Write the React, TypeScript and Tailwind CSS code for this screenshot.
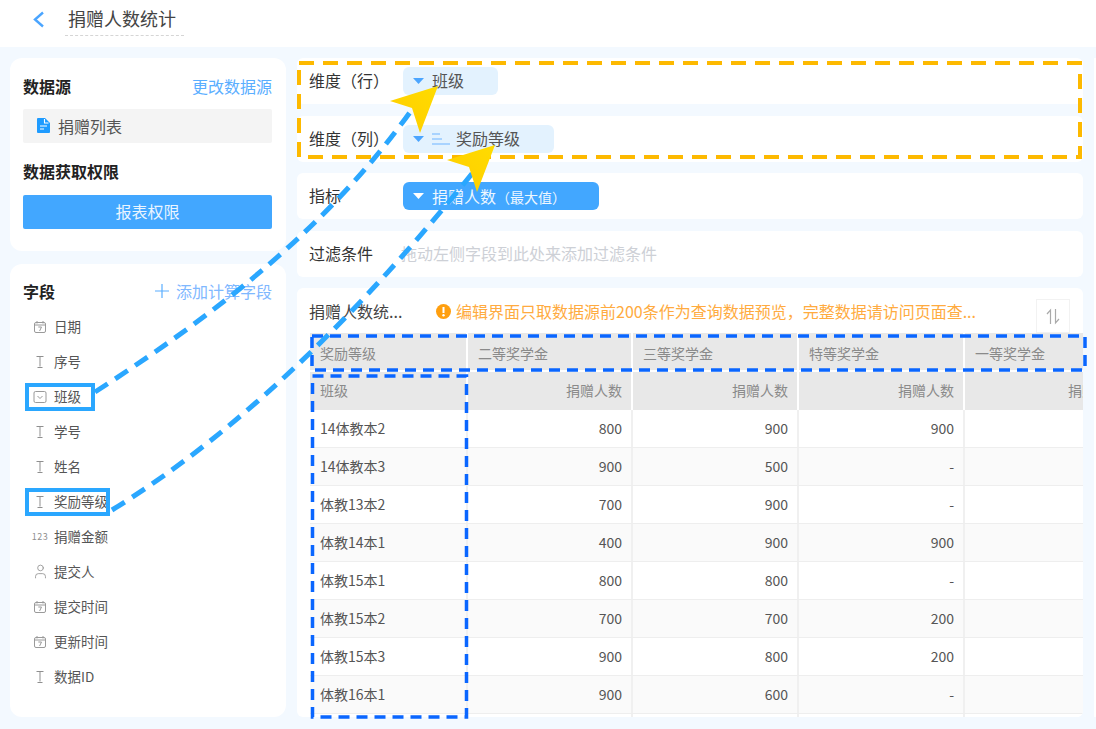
import React from "react";
import { User } from "lucide-react";

const font = { fontFamily: '"Noto Sans CJK SC", "Noto Sans", sans-serif' };

function CalIcon() {
  return (
    <svg width="14" height="14" viewBox="0 0 14 14" fill="none" stroke="#9a9a9a" strokeWidth="1">
      <rect x="1.5" y="2.5" width="11" height="10" rx="1.5" />
      <path d="M1.5 5h11M4 1v2.5M10 1v2.5" />
      <path d="M5.3 7h3.2L6.600 11" />
    </svg>
  );
}
function TIcon() {
  return (
    <svg width="14" height="14" viewBox="0 0 14 14" fill="none" stroke="#8f8f8f" strokeWidth="1">
      <path d="M3.500 1.500h7M7 1.500v10M4.500 12.500h5" />
    </svg>
  );
}
function BoxIcon() {
  return (
    <svg width="14" height="14" viewBox="0 0 14 14" fill="none" stroke="#9a9a9a" strokeWidth="1">
      <rect x="1" y="1.500" width="12" height="11" rx="1.500" />
      <path d="M4.500 6l2.500 2.500L9.500 6" />
    </svg>
  );
}
function NumIcon() {
  return <span className="text-[9px] leading-none tracking-[0.5px] text-[#8f8f8f] whitespace-nowrap">123</span>;
}
function UserIcon() {
  return <User size={17} strokeWidth={1.1} color="#8a8a8a" />;
}

const fields: { n: string; i: React.ReactNode; mark?: string }[] = [
  { n: "日期", i: <CalIcon /> },
  { n: "序号", i: <TIcon /> },
  { n: "班级", i: <BoxIcon />, mark: "w-[70px]" },
  { n: "学号", i: <TIcon /> },
  { n: "姓名", i: <TIcon /> },
  { n: "奖励等级", i: <TIcon />, mark: "w-[85px]" },
  { n: "捐赠金额", i: <NumIcon /> },
  { n: "提交人", i: <UserIcon /> },
  { n: "提交时间", i: <CalIcon /> },
  { n: "更新时间", i: <CalIcon /> },
  { n: "数据ID", i: <TIcon /> },
];

const cols = "grid grid-cols-[158px_165px_166px_166px_170px] w-[825px]";
const rows = [
  ["14体教本2", "800", "900", "900"],
  ["14体教本3", "900", "500", "-"],
  ["体教13本2", "700", "900", "-"],
  ["体教14本1", "400", "900", "900"],
  ["体教15本1", "800", "800", "-"],
  ["体教15本2", "700", "700", "200"],
  ["体教15本3", "900", "800", "200"],
  ["体教16本1", "900", "600", "-"],
  ["", "", "", ""],
];

function Tri({ c }: { c: string }) {
  return (
    <svg width="11" height="6" viewBox="0 0 11 6" className="shrink-0">
      <path d="M0 0h11L5.500 6z" fill={c} />
    </svg>
  );
}

export default function App() {
  return (
    <div style={font} className="relative w-[1096px] h-[729px] overflow-hidden bg-[#f3f9ff] text-[#333]">
      {/* Header */}
      <div className="h-[47px] bg-white flex items-center pl-[32px]">
        <svg width="13" height="17" viewBox="0 0 13 17" fill="none" className="-mt-[9px]">
          <path d="M11 1.500L3 8.500l8 7" stroke="#4ba5ff" strokeWidth="2.400" />
        </svg>
        <div className="ml-[20px] -mt-[12px] h-[36px] w-[119px] border-b border-dashed border-[#d5d5d5] pl-[3px] text-[18px] leading-[36px] text-[#444]">
          捐赠人数统计
        </div>
      </div>

      <div className="flex pt-[11px] pl-[10px] gap-[11px]">
        {/* Left column */}
        <div className="w-[276px] flex flex-col gap-[13px]">
          <div className="h-[193px] rounded-[12px] bg-white pl-[13px] pr-[14px] pt-[16px]">
            <div className="flex justify-between items-center h-[24px]">
              <span className="text-[16px] font-bold text-[#222]">数据源</span>
              <span className="text-[16px] text-[#5aaeff]">更改数据源</span>
            </div>
            <div className="mt-[11px] h-[34px] bg-[#f4f4f4] rounded-[2px] flex items-center pl-[14px] gap-[8px] text-[16px] text-[#555] pb-[1px]">
              <svg width="13" height="15" viewBox="0 0 13 15">
                <path d="M0 1a1 1 0 011-1h7l5 5v9a1 1 0 01-1 1H1a1 1 0 01-1-1z" fill="#1e9bff" />
                <path d="M3 8h7M3 11h4M7.500 1v4h4" stroke="#fff" strokeWidth="1.100" fill="none" />
              </svg>
              捐赠列表
            </div>
            <div className="mt-[16px] h-[24px] flex items-center text-[16px] font-bold text-[#222]">数据获取权限</div>
            <div className="mt-[12px] h-[34px] rounded-[2px] bg-[#42a7ff] flex items-center justify-center text-[16px] text-[#eaf5ff] pb-[2px]">
              报表权限
            </div>
          </div>
          <div className="h-[453px] rounded-[12px] bg-white pl-[13px] pr-[14px] pt-[15px]">
            <div className="flex justify-between items-center h-[24px]">
              <span className="text-[16px] font-bold text-[#222]">字段</span>
              <span className="flex items-center gap-[6px] text-[16px] text-[#7fb8ff]">
                <svg width="16" height="16" viewBox="0 0 16 16" stroke="#5aaeff" strokeWidth="1.200">
                  <path d="M8 1v14M1 8h14" />
                </svg>
                添加计算字段
              </span>
            </div>
            <div className="mt-[6px]">
              {fields.map((f) => (
                <div key={f.n} className="relative h-[35px] flex items-center text-[13.5px] text-[#555] pl-[8px]">
                  <span className="w-[18px] flex justify-center shrink-0">{f.i}</span>
                  <span className="ml-[5px]">{f.n}</span>
                  {f.mark && (
                    <div className={`absolute left-[2px] top-[4px] h-[28px] border-[4px] border-[#2aa7ff] ${f.mark}`} />
                  )}
                </div>
              ))}
            </div>
          </div>
        </div>

        {/* Right column */}
        <div className="w-[786px] flex flex-col">
          <div className="h-[46px] rounded-[6px] bg-white flex items-center pl-[12px] text-[16px]">
            <span className="w-[94px] -translate-y-px">维度（行）</span>
            <div className="h-[28px] w-[95px] rounded-[6px] bg-[#e3f2fe] flex items-center pl-[10px] gap-[8px] text-[#555] -mt-[1px]">
              <Tri c="#4ba5ff" />
              <span className="-translate-y-px">班级</span>
            </div>
          </div>
          <div className="mt-[12px] h-[46px] rounded-[6px] bg-white flex items-center pl-[12px] text-[16px]">
            <span className="w-[94px] -translate-y-px">维度（列）</span>
            <div className="h-[28px] w-[151px] rounded-[6px] bg-[#e3f2fe] flex items-center pl-[10px] gap-[8px] text-[#555]">
              <Tri c="#4ba5ff" />
              <svg width="18" height="14" viewBox="0 0 18 14" stroke="#6fb4ff" strokeWidth="1.200" className="shrink-0">
                <path d="M0 2h8M0 7h10M0 12h18" />
              </svg>
              <span className="ml-[-2px] -translate-y-px">奖励等级</span>
            </div>
          </div>
          <div className="mt-[11px] h-[46px] rounded-[6px] bg-white flex items-center pl-[12px] text-[16px]">
            <span className="w-[94px] -translate-y-px">指标</span>
            <div className="h-[28px] w-[196px] rounded-[6px] bg-[#42a7ff] flex items-center pl-[10px] gap-[8px] text-[#eef7ff]">
              <Tri c="#ffffff" />
              <span>
                捐赠人数<span className="text-[14px]">（最大值）</span>
              </span>
            </div>
          </div>
          <div className="mt-[12px] h-[46px] rounded-[6px] bg-white flex items-center pl-[12px] text-[16px]">
            <span className="w-[92px] -translate-y-px">过滤条件</span>
            <span className="text-[#cdd0d6] -translate-y-px">拖动左侧字段到此处来添加过滤条件</span>
          </div>
          <div className="mt-[11px] h-[429px] rounded-[6px] bg-white overflow-hidden">
            <div className="h-[45px] flex items-start pl-[12px] pt-[11px] text-[16px] relative">
              <span className="w-[127px] leading-[24px] text-[#444]">捐赠人数统...</span>
              <span className="flex items-center gap-[5px] leading-[24px] text-[#ffab40]">
                <svg width="15" height="15" viewBox="0 0 15 15" className="shrink-0">
                  <circle cx="7.500" cy="7.500" r="7.500" fill="#ff9f0f" />
                  <path d="M7.500 3v6" stroke="#fff" strokeWidth="2" />
                  <circle cx="7.500" cy="11.300" r="1.200" fill="#fff" />
                </svg>
                编辑界面只取数据源前200条作为查询数据预览，完整数据请访问页面查...
              </span>
              <div className="absolute left-[739px] top-[11px] w-[34px] h-[34px] border border-[#f2f2f2] flex items-center justify-center">
                <svg width="16" height="17" viewBox="0 0 16 17" fill="none" stroke="#aaa" strokeWidth="1.200">
                  <path d="M5.500 16V2L2 6M10.500 1v14l3.500-4" />
                </svg>
              </div>
            </div>
            <div className="ml-[13px] w-[773px] overflow-hidden text-[14px]">
              <div className={cols + " h-[39px] bg-[#e8e8e8] text-[#8a8a8a] border-b-2 border-white"}>
                {["奖励等级", "二等奖学金", "三等奖学金", "特等奖学金", "一等奖学金"].map((h) => (
                  <div key={h} className="pl-[10px] leading-[40px] border-r-2 border-white">
                    {h}
                  </div>
                ))}
              </div>
              <div className={cols + " h-[38px] bg-[#e8e8e8] text-[#8a8a8a]"}>
                <div className="pl-[10px] leading-[37px] border-r-2 border-white">班级</div>
                {[0, 1, 2, 3].map((i) => (
                  <div key={i} className="pr-[9px] text-right leading-[37px] border-r-2 border-white">
                    捐赠人数
                  </div>
                ))}
              </div>
              {rows.map((r, idx) => (
                <div
                  key={idx}
                  className={cols + " h-[38px] border-b border-[#eeeeee] text-[#555] " + (idx % 2 ? "bg-[#fafafa]" : "bg-white")}
                >
                  <div className="pl-[10px] leading-[37px] border-r-2 border-[#f0f0f0]">{r[0]}</div>
                  <div className="pr-[9px] text-right leading-[37px] border-r-2 border-[#f0f0f0]">{r[1]}</div>
                  <div className="pr-[9px] text-right leading-[37px] border-r-2 border-[#f0f0f0]">{r[2]}</div>
                  <div className="pr-[9px] text-right leading-[37px] border-r-2 border-[#f0f0f0]">{r[3]}</div>
                  <div />
                </div>
              ))}
            </div>
          </div>
        </div>
      </div>

      {/* sliver of the next panel */}
      <div className="absolute left-[1094px] top-[58px] w-[2px] h-[659px] bg-white" />

      {/* Annotation layer */}
      <svg className="absolute inset-0 pointer-events-none" width="1096" height="729" fill="none">
        <defs>
          <linearGradient id="y" x1="0" y1="1" x2="1" y2="0">
            <stop offset="0" stopColor="#ffcc00" />
            <stop offset="1" stopColor="#ffdc00" />
          </linearGradient>
        </defs>
        <rect x="299" y="63" width="781" height="94" stroke="#fdb900" strokeWidth="4" strokeDasharray="15 9" />
        <rect x="312" y="336" width="773" height="34" stroke="#0a66ff" strokeWidth="3.500" strokeDasharray="11 7" />
        <rect x="312.500" y="376" width="154" height="341" stroke="#0a66ff" strokeWidth="3.500" strokeDasharray="11 7" />
        <path d="M95 392C222 310 330 225 413 108" stroke="#2aa7ff" strokeWidth="5" strokeDasharray="15 9" />
        <path d="M112 510C250 425 370 300 475 170" stroke="#2aa7ff" strokeWidth="5" strokeDasharray="15 9" />
        <path d="M438 86L390 101L412 108L420 133Z" fill="url(#y)" />
        <path d="M495 145L447 160L469 167L477 192Z" fill="url(#y)" />
      </svg>
    </div>
  );
}
